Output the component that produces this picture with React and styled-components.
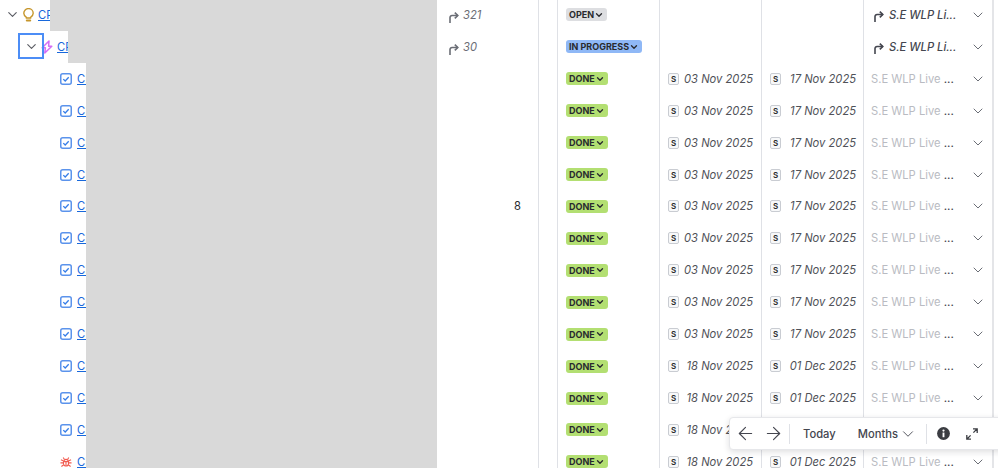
import React from "react";
import styled, { createGlobalStyle } from "styled-components";
import { ArrowLeft, ArrowRight, ChevronDown } from "lucide-react";

const GlobalStyle = createGlobalStyle`
  html, body {
    margin: 0;
    padding: 0;
    background: #fff;
    font-family: "Inter", "Liberation Sans", sans-serif;
  }
`;

// styled comps
const Page = styled.div`
  position: relative;
  width: 998px;
  height: 468px;
  overflow: hidden;
`;

const Rows = styled.div`
  margin-top: -1px;
`;

const Row = styled.div`
  display: grid;
  grid-template-columns: 437px 102px 19px 102px 102px 102px 130px 4px;
  height: 31.93px;
`;

const TreeCell = styled.div`
  display: flex;
  align-items: center;
  padding-left: ${(p) => 6 + p.$level * 19}px;
`;

const Toggle = styled.span`
  position: relative;
  display: flex;
  flex: none;
  justify-content: center;
  width: 12px;
  margin-right: 4px;
  color: #5a5c63;

  ${(p) =>
    p.$focused &&
    `
    &::after {
      content: "";
      position: absolute;
      left: -7px;
      top: -6px;
      width: 22px;
      height: 22px;
      border: 2px solid #4c8df6;
    }
  `}
`;

const TypeIcon = styled.span`
  display: flex;
  flex: none;
  justify-content: center;
  width: 12px;
  margin-right: ${(p) => (p.$leaf ? "5px" : "4px")};
  margin-left: ${(p) => (p.$leaf ? "16px" : "0")};
`;

const Key = styled.a`
  flex: none;
  width: ${(p) => [12, 11, 9][p.$level]}px;
  overflow: hidden;
  white-space: nowrap;
  color: #1868db;
  font-size: 11.2px;
  line-height: 16px;
  text-decoration: underline;
`;

const Redacted = styled.div`
  flex: 1;
  align-self: stretch;
  background: #d9d9d9;
`;

const ChildCell = styled.div`
  display: flex;
  align-items: center;
  gap: 4px;
  padding-left: 12px;
  border-right: 1px solid #dfe1e6;
  color: #6b6e76;
  font-size: 11.2px;
  font-style: italic;
`;

const Points = styled.span`
  margin-left: 65px;
  color: #292a2e;
  font-size: 11.2px;
  font-style: normal;
`;

const Spacer = styled.div`
  border-right: 1px solid #dfe1e6;
`;

const StatusCell = styled.div`
  display: flex;
  align-items: center;
  padding-left: 8px;
  border-right: 1px solid #dfe1e6;
`;

const Lozenge = styled.span`
  display: flex;
  align-items: center;
  height: 13px;
  padding: 0 3px;
  border-radius: 3px;
  background: ${(p) => p.$bg};
  color: #292a2e;
  font-size: 9px;
  font-weight: 700;
  white-space: nowrap;
`;

const DateCell = styled.div`
  display: flex;
  align-items: center;
  justify-content: space-between;
  padding: 0 ${(p) => p.$right}px 0 8px;
  border-right: 1px solid #dfe1e6;
  color: #505258;
  font-size: 11.2px;
  font-style: italic;
  white-space: nowrap;
`;

const SprintBadge = styled.span`
  display: flex;
  align-items: center;
  justify-content: center;
  box-sizing: border-box;
  width: 11px;
  height: 12px;
  border: 1px solid #c9ccd2;
  border-radius: 2px;
  background: #f7f8f9;
  color: #292a2e;
  font-size: 8px;
  font-style: normal;
  font-weight: 600;
`;

const ParentCell = styled.div`
  display: flex;
  align-items: center;
  padding-left: 7px;
  border-right: 2px solid #e4e5e8;
`;

const ParentArrow = styled.span`
  display: flex;
  margin: 3px 0 0 3px;
`;

const ParentName = styled.span`
  flex: 1;
  margin-left: 5px;
  color: #44464f;
  font-size: 11.2px;
  font-style: italic;
  font-weight: 500;
  white-space: nowrap;
`;

const ParentMuted = styled.span`
  flex: 1;
  color: #b9bbc2;
  font-size: 11.2px;
  white-space: nowrap;

  b {
    color: #44464f;
    font-weight: 500;
  }
`;

const CellChevron = styled.span`
  display: flex;
  margin-right: 6px;
  color: #6b6e76;
`;

const ChildArrow = styled.span`
  display: flex;
  margin-top: 5px;
`;

const Toolbar = styled.div`
  position: absolute;
  left: 729px;
  top: 417px;
  display: flex;
  align-items: center;
  box-sizing: border-box;
  width: 280px;
  height: 33px;
  padding-left: 5px;
  border: 1px solid #e6e7ea;
  border-radius: 4px;
  background: #fff;
  box-shadow: 0 2px 6px rgba(30, 31, 33, 0.14);
  color: #44464f;
`;

const ToolButton = styled.span`
  display: flex;
  flex: none;
  align-items: center;
  margin-right: ${(p) => p.$gap || 0}px;
  font-size: 11.2px;
  font-weight: 500;
`;

const MenuChevron = styled(ChevronDown)`
  margin-left: 1px;
`;

const Divider = styled.span`
  flex: none;
  width: 1px;
  height: 20px;
  margin: 0 ${(p) => p.$right}px 0 ${(p) => p.$left}px;
  background: #dfe1e6;
`;

const Bulb = () => (
  <svg width="11" height="14" viewBox="0 0 11 14" fill="none" stroke="#c6962c" strokeWidth="1.4">
    <path d="M3.4 9.3C1.8 8.2.8 7 .8 5.3a4.7 4.7 0 0 1 9.4 0c0 1.7-1 2.9-2.6 4V10H3.4v-.7Z" />
    <path d="M3.8 12.4h3.4" strokeWidth="2" strokeLinecap="round" />
  </svg>
);

const Epic = () => (
  <svg width="12" height="14" viewBox="0 0 12 14" fill="none" stroke="#d56df5" strokeWidth="1.5" strokeLinejoin="round">
    <path d="M8 1 1.2 7.8h3.2L3.8 13 10.8 6.2H7.6L8 1Z" />
  </svg>
);

const Task = () => (
  <svg width="12" height="12" viewBox="0 0 12 12" fill="none">
    <rect x="0.75" y="0.75" width="10.5" height="10.5" rx="2" stroke="#5b93ec" strokeWidth="1.5" />
    <path d="M3.3 6.1 5.2 8l3.5-3.8" stroke="#357de8" strokeWidth="1.3" />
  </svg>
);

const Bug = () => (
  <svg width="13" height="12" viewBox="0 0 13 12" fill="none" stroke="#f15b50" strokeWidth="1.2">
    <ellipse cx="6.5" cy="6.8" rx="2.8" ry="3.6" />
    <path d="M3.8 5.6h5.4M6.5 5.6v4.8M4.8 3.3 3.5 1.2M8.2 3.3l1.3-2.1M3.8 4.8 1 3.6M9.2 4.8 12 3.6M3.7 7H.5M9.3 7h3.2M4.1 9l-2.6 1.8M8.9 9l2.6 1.8" />
  </svg>
);

const CornerArrow = ({ color }) => (
  <svg width="10" height="11" viewBox="0 0 10 11" fill="none" stroke={color} strokeWidth="1.6">
    <path d="M1 11V5.5a2 2 0 0 1 2-2h6" />
    <path d="M5.8.6 8.8 3.5 5.8 6.4" />
  </svg>
);

const InfoFilled = () => (
  <svg width="13" height="13" viewBox="0 0 14 14">
    <circle cx="7" cy="7" r="6.9" fill="#3b3d42" />
    <rect x="6" y="6" width="2" height="5" fill="#fff" />
    <circle cx="7" cy="3.9" r="1.2" fill="#fff" />
  </svg>
);

const ExpandIcon = () => (
  <svg width="12" height="12" viewBox="0 0 12 12" fill="none" stroke="#3b3d42" strokeWidth="1.3">
    <path d="M7 .8h4.2V5M11.2.8 7.4 4.6M.8 7v4.2H5M.8 11.2l3.8-3.8" />
  </svg>
);

const doneRows = [
  ["03 Nov 2025", "17 Nov 2025"],
  ["03 Nov 2025", "17 Nov 2025"],
  ["03 Nov 2025", "17 Nov 2025"],
  ["03 Nov 2025", "17 Nov 2025"],
  ["03 Nov 2025", "17 Nov 2025", "8"],
  ["03 Nov 2025", "17 Nov 2025"],
  ["03 Nov 2025", "17 Nov 2025"],
  ["03 Nov 2025", "17 Nov 2025"],
  ["03 Nov 2025", "17 Nov 2025"],
  ["18 Nov 2025", "01 Dec 2025"],
  ["18 Nov 2025", "01 Dec 2025"],
  ["18 Nov 2025", "01 Dec 2025"],
  ["18 Nov 2025", "01 Dec 2025"],
];

const Status = ({ label, bg }) => (
  <Lozenge $bg={bg}>
    {label}
    <ChevronDown size={10} strokeWidth={3.2} />
  </Lozenge>
);

const Chevron = () => (
  <CellChevron>
    <ChevronDown size={16} strokeWidth={1.5} />
  </CellChevron>
);

const ParentRow = ({ level, icon, count, label, bg, focused }) => (
  <Row>
    <TreeCell $level={level}>
      <Toggle $focused={focused}>
        <ChevronDown size={15} strokeWidth={1.8} style={{ flex: "none" }} />
      </Toggle>
      <TypeIcon>{icon}</TypeIcon>
      <Key $level={level}>CP</Key>
      <Redacted />
    </TreeCell>
    <ChildCell>
      <ChildArrow>
        <CornerArrow color="#6b6e76" />
      </ChildArrow>
      {count}
    </ChildCell>
    <Spacer />
    <StatusCell>
      <Status label={label} bg={bg} />
    </StatusCell>
    <DateCell $right={8} />
    <DateCell $right={7} />
    <ParentCell>
      <ParentArrow>
        <CornerArrow color="#44464f" />
      </ParentArrow>
      <ParentName>S.E WLP Li...</ParentName>
      <Chevron />
    </ParentCell>
  </Row>
);

const App = () => (
  <Page>
    <GlobalStyle />
    <Rows>
      <ParentRow level={0} icon={<Bulb />} count="321" label="OPEN" bg="#dddee1" />
      <ParentRow level={1} icon={<Epic />} count="30" label="IN PROGRESS" bg="#8fb8f6" focused />
      {doneRows.map(([start, end, points], i) => (
        <Row key={i}>
          <TreeCell $level={2}>
            <TypeIcon $leaf>{i === 12 ? <Bug /> : <Task />}</TypeIcon>
            <Key $level={2}>CP</Key>
            <Redacted />
          </TreeCell>
          <ChildCell>{points && <Points>{points}</Points>}</ChildCell>
          <Spacer />
          <StatusCell>
            <Status label="DONE" bg="#b3df72" />
          </StatusCell>
          <DateCell $right={8}>
            <SprintBadge>S</SprintBadge>
            {start}
          </DateCell>
          <DateCell $right={7}>
            <SprintBadge>S</SprintBadge>
            {end}
          </DateCell>
          <ParentCell>
            <ParentMuted>
              S.E WLP Live <b>...</b>
            </ParentMuted>
            <Chevron />
          </ParentCell>
        </Row>
      ))}
    </Rows>
    <Toolbar>
      <ToolButton $gap={7}>
        <ArrowLeft size={21} strokeWidth={1.3} />
      </ToolButton>
      <ToolButton>
        <ArrowRight size={21} strokeWidth={1.3} />
      </ToolButton>
      <Divider $left={5} $right={13} />
      <ToolButton $gap={22}>Today</ToolButton>
      <ToolButton>
        Months
        <MenuChevron size={18} strokeWidth={1.2} />
      </ToolButton>
      <Divider $left={9} $right={10} />
      <ToolButton $gap={16}>
        <InfoFilled />
      </ToolButton>
      <ToolButton>
        <ExpandIcon />
      </ToolButton>
    </Toolbar>
  </Page>
);

export default App;
